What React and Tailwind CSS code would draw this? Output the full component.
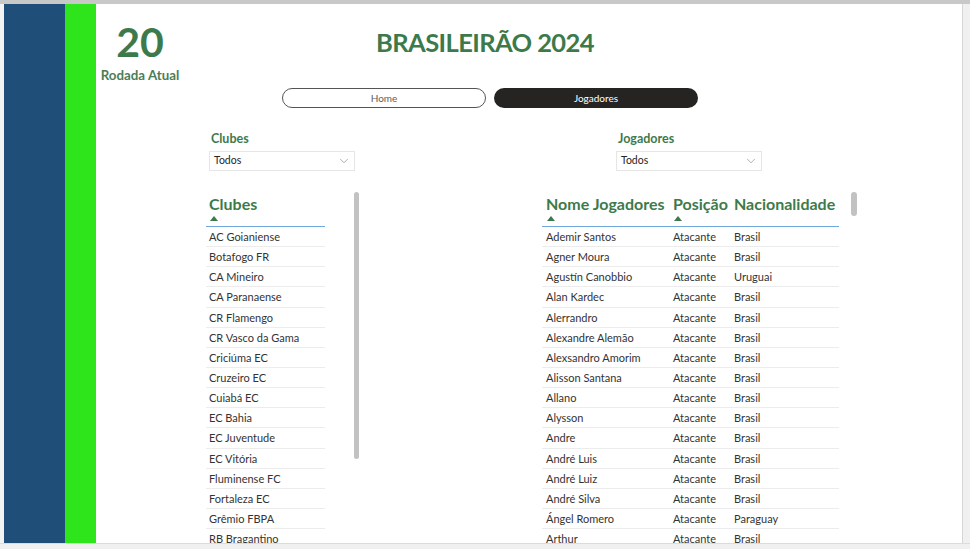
import { ChevronDown } from 'lucide-react'

const clubes = [
  'AC Goianiense', 'Botafogo FR', 'CA Mineiro', 'CA Paranaense', 'CR Flamengo', 'CR Vasco da Gama',
  'Criciúma EC', 'Cruzeiro EC', 'Cuiabá EC', 'EC Bahia', 'EC Juventude', 'EC Vitória',
  'Fluminense FC', 'Fortaleza EC', 'Grêmio FBPA', 'RB Bragantino',
]

const jogadores = [
  ['Ademir Santos', 'Brasil'], ['Agner Moura', 'Brasil'], ['Agustín Canobbio', 'Uruguai'],
  ['Alan Kardec', 'Brasil'], ['Alerrandro', 'Brasil'], ['Alexandre Alemão', 'Brasil'],
  ['Alexsandro Amorim', 'Brasil'], ['Alisson Santana', 'Brasil'], ['Allano', 'Brasil'],
  ['Alysson', 'Brasil'], ['Andre', 'Brasil'], ['André Luis', 'Brasil'], ['André Luiz', 'Brasil'],
  ['André Silva', 'Brasil'], ['Ángel Romero', 'Paraguay'], ['Arthur', 'Brasil'],
]

function Arrow() {
  return <div className="w-0 h-0 border-l-[4.5px] border-r-[4.5px] border-b-[5px] border-l-transparent border-r-transparent border-b-[#3d7a4b]" />
}

function Slicer({ label }) {
  return (
    <div className="w-[146px]">
      <p className="pl-[2px] text-[12.5px] leading-[16px] font-bold text-[#3d7a4b]">{label}</p>
      <div className="mt-[4px] h-[20px] border border-[#e6e6e6] flex items-center justify-between pl-[4px] pr-[3px]">
        <span className="text-[10.5px] text-[#252423]">Todos</span>
        <ChevronDown size={14} strokeWidth={1} className="text-[#777]" />
      </div>
    </div>
  )
}

export default function App() {
  return (
    <div className="w-[970px] h-[549px] bg-[#f0f0f0] flex flex-col overflow-hidden" style={{ fontFamily: 'Lato, "Open Sans", sans-serif' }}>
      <div className="h-[4px] bg-[#c8c8c8] shrink-0" />
      <div className="flex h-[539px] shrink-0">
        <div className="w-[4px] bg-[#f3f3f3]" />
        <div className="w-[958px] bg-white flex overflow-hidden">
          <div className="w-[61px] bg-[#1f4e79] shrink-0" />
          <div className="w-[31px] bg-[#2ee51b] shrink-0" />

          <div className="flex-1 flex flex-col">
            {/* top row */}
            <div className="flex">
              <div className="w-[88px] flex flex-col items-center whitespace-nowrap">
                <p className="mt-[16px] text-[41px] leading-[44px] font-bold text-[#3d7a4b]">20</p>
                <p className="mt-[2px] text-[13.3px] leading-[18px] font-bold text-[#4a7d56]">Rodada Atual</p>
              </div>
              <div className="ml-[98px] w-[416px] flex flex-col">
                <p className="mt-[22px] pr-[10px] text-center text-[25.5px] leading-[33px] font-bold tracking-[-0.6px] text-[#3d7a4b]">BRASILEIRÃO 2024</p>
                <div className="mt-[29px] flex gap-[8px]">
                  <div className="w-[204px] h-[20px] rounded-full border border-[#555] flex items-center justify-center text-[10px] text-[#605e5c]">Home</div>
                  <div className="w-[204px] h-[20px] rounded-full bg-[#252423] flex items-center justify-center text-[10px] text-white">Jogadores</div>
                </div>
              </div>
            </div>

            {/* slicers */}
            <div className="mt-[23px] flex">
              <div className="ml-[113px]"><Slicer label="Clubes" /></div>
              <div className="ml-[261px]"><Slicer label="Jogadores" /></div>
            </div>

            {/* tables */}
            <div className="mt-[22px] flex items-start">
              <div className="ml-[110px] w-[119px]">
                <div className="h-[34px] border-b border-[#6fa8dc] pl-[3px] pt-[1px]">
                  <p className="text-[16px] leading-[20px] font-bold text-[#3d7a4b]">Clubes</p>
                  <div className="mt-[2px] ml-[1px]"><Arrow /></div>
                </div>
                {clubes.map(c => (
                  <div key={c} className="h-[20.15px] border-b border-[#ececec] pl-[3px] text-[11px] leading-[20px] text-[#333] whitespace-nowrap">{c}</div>
                ))}
              </div>
              <div className="ml-[29px] mt-[-1px] w-[5px] h-[267px] rounded-full bg-[#c2c2c2]" />

              <div className="ml-[183px] w-[297px]">
                <div className="h-[34px] border-b border-[#6fa8dc] pt-[1px] flex text-[16px] leading-[20px] font-bold text-[#3d7a4b] whitespace-nowrap">
                  <div className="w-[127px] pl-[4px]">
                    <p>Nome Jogadores</p>
                    <div className="mt-[2px] ml-[1px]"><Arrow /></div>
                  </div>
                  <div className="w-[61px] pl-[4px]">
                    <p>Posição</p>
                    <div className="mt-[2px] ml-[1px]"><Arrow /></div>
                  </div>
                  <div className="pl-[4px]"><p>Nacionalidade</p></div>
                </div>
                {jogadores.map(([n, nat]) => (
                  <div key={n} className="h-[20.15px] border-b border-[#ececec] flex text-[11px] leading-[20px] text-[#333] whitespace-nowrap">
                    <div className="w-[127px] pl-[4px]">{n}</div>
                    <div className="w-[61px] pl-[4px]">Atacante</div>
                    <div className="pl-[4px]">{nat}</div>
                  </div>
                ))}
              </div>
              <div className="ml-[12px] mt-[-1px] w-[6px] h-[24px] rounded-full bg-[#c2c2c2]" />
            </div>
          </div>
        </div>
        <div className="w-[8px] border-l border-[#d6d6d6] bg-[#f0f0f0]" />
      </div>
      <div className="flex-1 border-t border-[#dcdcdc] bg-[#f0f0f0]" />
    </div>
  )
}
